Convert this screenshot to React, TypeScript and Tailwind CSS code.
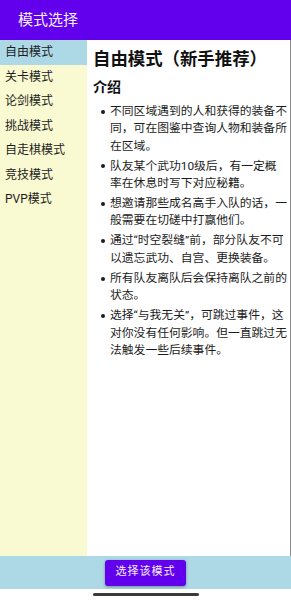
import React, { useState } from 'react';

const modes = ['自由模式', '关卡模式', '论剑模式', '挑战模式', '自走棋模式', '竞技模式', 'PVP模式'];

const tips = [
  '不同区域遇到的人和获得的装备不同，可在图鉴中查询人物和装备所在区域。',
  '队友某个武功10级后，有一定概率在休息时写下对应秘籍。',
  '想邀请那些成名高手入队的话，一般需要在切磋中打赢他们。',
  '通过“时空裂缝”前，部分队友不可以遗忘武功、自宫、更换装备。',
  '所有队友离队后会保持离队之前的状态。',
  '选择“与我无关”，可跳过事件，这对你没有任何影响。但一直跳过无法触发一些后续事件。',
];

export default function App() {
  const [selected, setSelected] = useState(0);

  return (
    <div className="flex h-[600px] w-[291px] flex-col bg-white font-['Roboto','Noto_Sans_CJK_SC',sans-serif] text-[#1c1c1c]">
      <header className="flex h-[40px] shrink-0 items-center bg-[#6200ee] pl-[18px] text-[15px] text-[#f4f0fb]">
        模式选择
      </header>

      <div className="flex min-h-0 flex-1">
        <nav className="w-[87px] shrink-0 bg-[#fafad2]">
          {modes.map((m, i) => (
            <div
              key={m}
              onClick={() => setSelected(i)}
              className={`flex h-[24.5px] items-center pl-[5px] text-[12px] ${i === selected ? 'bg-[#add8e6]' : ''}`}
            >
              {m}
            </div>
          ))}
        </nav>

        <main className="flex-1 border-r-[1.5px] border-[#8a8a8a] bg-white pl-[6px] pr-[2px]">
          <h1 className="mt-[7px] text-[17.4px] leading-[24px] font-bold text-[#111]">自由模式（新手推荐）</h1>
          <h2 className="mt-[6px] text-[14px] leading-[20px] font-bold text-[#111]">介绍</h2>
          <ul className="mt-[6px] flex flex-col gap-[2.8px]">
            {tips.map((t) => (
              <li key={t} className="flex text-[11.8px] leading-[17.3px]">
                <span className="flex h-[17.3px] w-[17px] shrink-0 items-center pl-[8px]">
                  <span className="h-[4px] w-[4px] rounded-full bg-[#1c1c1c]" />
                </span>
                <span>{t}</span>
              </li>
            ))}
          </ul>
        </main>
      </div>

      <div className="flex h-[33px] shrink-0 items-center justify-center bg-[#add8e6]">
        <button className="h-[26px] w-[81px] rounded-[3px] bg-[#6200ee] text-[11px] tracking-[1px] text-[#f4f0fb] shadow-[0_1px_3px_rgba(0,0,0,0.35)]">
          选择该模式
        </button>
      </div>

      <div className="flex h-[11px] shrink-0 items-center justify-center bg-white">
        <div className="h-[3px] w-[106px] rounded-full bg-[#3a3a3a]" />
      </div>
    </div>
  );
}
